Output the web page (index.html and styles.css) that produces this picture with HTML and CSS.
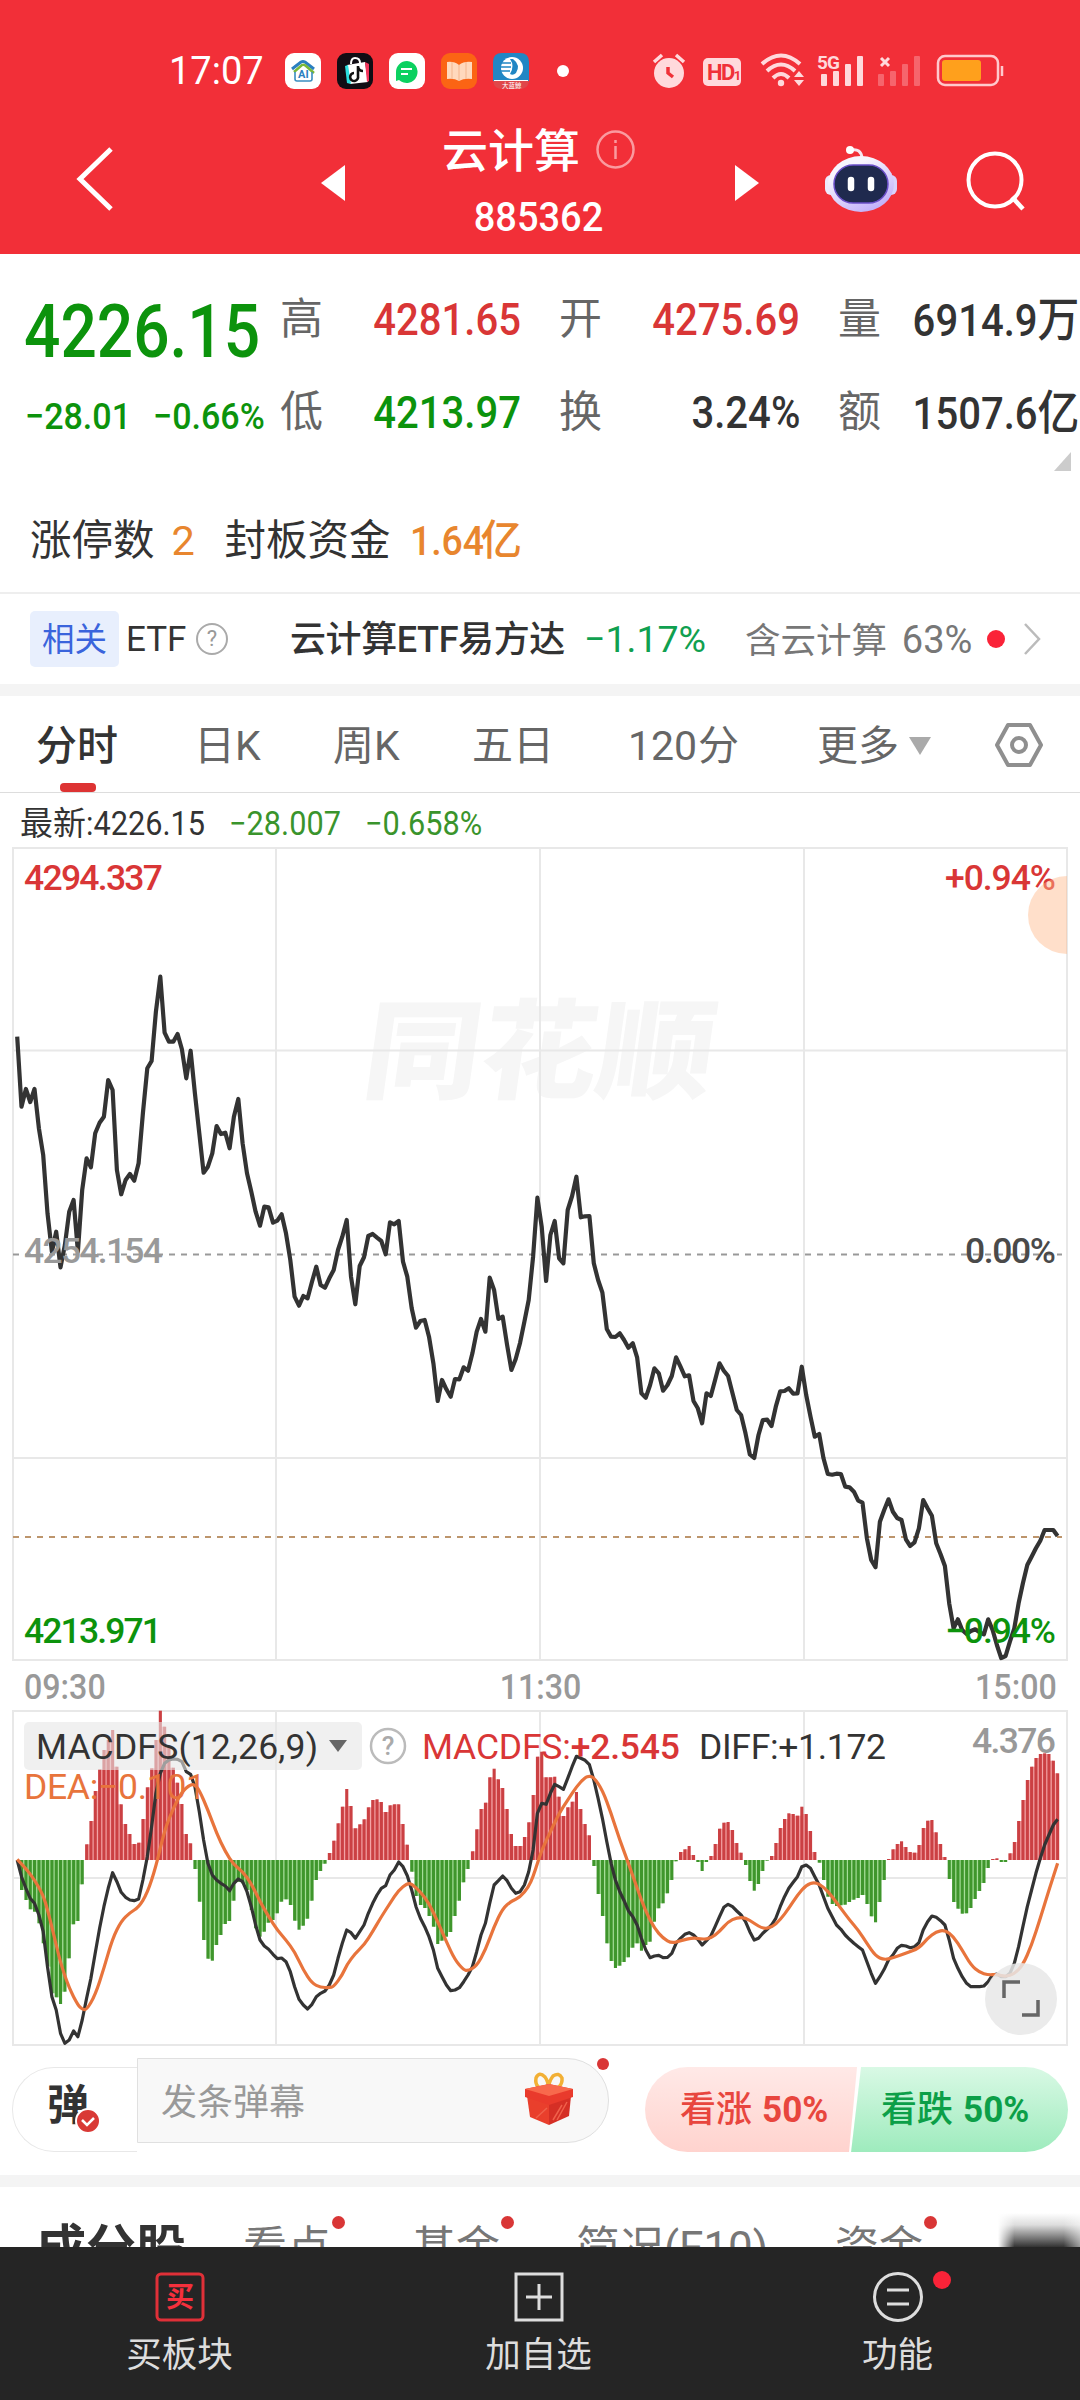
FILE: index.html
```html
<!DOCTYPE html>
<html lang="zh-CN">
<head>
    <meta charset="utf-8">
    <title>云计算 885362</title>
    <link rel="stylesheet" href="styles.css">
</head>
<body>
    <header>
        <div class="status">
            <span class="clock">17:07</span>
            <svg class="apps" width="290" height="36" viewBox="0 0 290 36">
                <rect width="36" height="36" rx="9" fill="#fff"/>
                <path d="M7 16L16 9Q18 8 20 9L29 16" fill="none" stroke="#2a7fc0" stroke-width="3"/>
                <path d="M9 19L17 12Q19 11 21 13L29 20" fill="none" stroke="#79b83a" stroke-width="2.5"/>
                <path d="M10 19V26Q10 28 12 28H25Q27 28 27 26V19" fill="none" stroke="#3a8dc0" stroke-width="1.6"/>
                <text x="13" y="25" class="app-ai">AI</text>
                <rect x="52" width="36" height="36" rx="9" fill="#110d14"/>
                <path d="M62 12L80 9L83 29L65 31Z" fill="#fff"/>
                <path d="M60 13L63 12L66 31L62 30Z" fill="#2be0e0"/>
                <path d="M80 9L84 11L84 28L82 29Z" fill="#f4355c"/>
                <path d="M66 11Q66 5 70 5Q75 5 75 10" fill="none" stroke="#fff" stroke-width="2"/>
                <path d="M73 13V23A4 4 0 1 1 69 20M73 14Q74 18 78 18" fill="none" stroke="#111" stroke-width="2.6"/>
                <rect x="104" width="36" height="36" rx="9" fill="#fff"/>
                <path d="M122 8A11 11 0 1 1 114 27L111 28V19A11 11 0 0 1 122 8Z" fill="#0bd160"/>
                <path d="M116 16H127M116 21H123" stroke="#fff" stroke-width="2"/>
                <rect x="156" width="36" height="36" rx="9" fill="#fb6414"/>
                <path d="M162 9Q169 8 174 12Q179 8 187 9V26Q179 25 174 28Q169 25 162 26Z" fill="#ffd9bd"/>
                <path d="M174 12V28M167 9V26M181 9V26" stroke="#f3b58d" stroke-width="1"/>
                <path d="M208 28V9Q208 0 217 0H235Q244 0 244 9V28Z" fill="#2186c4"/>
                <path d="M208 28H244Q243 36 235 36H217Q209 36 208 28Z" fill="#e0474a"/>
                <circle cx="227" cy="15" r="11" fill="#fff"/>
                <path d="M228 6Q236 12 231 20Q228 23 225 21Q230 13 225 6Z" fill="#2186c4"/>
                <path d="M215 10H226M214 14H226M214 18H225" stroke="#2186c4" stroke-width="1.4"/>
                <path d="M209 27.500H243" stroke="#fff" stroke-width="1"/>
                <text x="217" y="34.500" class="app-hot">大蓝鲸</text>
                <circle cx="278" cy="18" r="6" fill="#fff"/>
            </svg>
            <svg class="signals" width="356" height="42" viewBox="0 -6 356 42">
                <g fill="#ffd9dc" stroke="none">
                    <circle cx="17" cy="20" r="15"/>
                    <path d="M2 9L10 2M32 9L24 2" stroke="#ffd9dc" stroke-width="3.500"/>
                    <path d="M16 14V20L21 24" fill="none" stroke="#f03038" stroke-width="3.500"/>
                    <rect x="51" y="5" width="38" height="28" rx="5"/>
                    <text x="55" y="27" class="hd">HD<tspan font-size="13">1</tspan></text>
                    <path d="M110 11Q129 -6 148 11M115 18Q129 5 143 18M121 25Q129 17 137 25" fill="none" stroke="#ffd9dc" stroke-width="4"/>
                    <circle cx="129" cy="30" r="3.200"/>
                    <path d="M142 24L147 18L152 24ZM142 27H152L147 33Z"/>
                    <text x="165" y="16" class="net">5G</text>
                    <rect x="169" y="21" width="6" height="12" rx="1"/>
                    <rect x="181" y="18" width="6" height="15" rx="1"/>
                    <rect x="193" y="11" width="6" height="22" rx="1"/>
                    <rect x="205" y="3" width="6" height="30" rx="1"/>
                </g>
                <path d="M229 5L237 13M237 5L229 13" stroke="#ffd9dc" stroke-width="3"/>
                <g fill="#f6656d">
                    <rect x="226" y="21" width="6" height="12" rx="1"/>
                    <rect x="238" y="18" width="6" height="15" rx="1"/>
                    <rect x="250" y="11" width="6" height="22" rx="1"/>
                    <rect x="262" y="3" width="6" height="30" rx="1"/>
                </g>
                <rect x="286" y="3" width="60" height="29" rx="7" fill="none" stroke="#ffc9cd" stroke-width="2.500"/>
                <rect x="290" y="7" width="39" height="21" rx="3" fill="#ffa01c"/>
                <path d="M350 13V23" stroke="#ffc9cd" stroke-width="2.500"/>
            </svg>
        </div>
        <div class="topbar">
            <svg class="back" width="40" height="66" viewBox="0 0 40 66"><path d="M35 3L4 33L35 63" fill="none" stroke="#fff" stroke-width="5"/></svg>
            <svg class="prev" width="24" height="36" viewBox="0 0 24 36"><path d="M24 0V36L0 18Z" fill="#fff"/></svg>
            <div class="title">
                <h1>云计算
                    <svg width="39" height="39" viewBox="0 0 39 39"><circle cx="19.500" cy="19.500" r="18" fill="none" stroke="#fa9a9f" stroke-width="2.500"/><path d="M19.500 16V29M19.500 10V13" stroke="#fa9a9f" stroke-width="2.500"/></svg>
                </h1>
                <div class="code">885362</div>
            </div>
            <svg class="next" width="24" height="36" viewBox="0 0 24 36"><path d="M0 0V36L24 18Z" fill="#fff"/></svg>
            <svg class="robot" width="74" height="68" viewBox="0 0 74 68">
                <defs>
                    <linearGradient id="shell" x1="0" y1="0" x2="0.600" y2="1"><stop offset="0.300" stop-color="#f7f5fd"/><stop offset="1" stop-color="#c3b2fa"/></linearGradient>
                </defs>
                <path d="M27 5Q37 3 38 13" fill="none" stroke="#f7e6f0" stroke-width="3"/>
                <circle cx="26" cy="5" r="4" fill="#fff"/>
                <rect x="1" y="30" width="12" height="20" rx="6" fill="#eeeafc"/>
                <rect x="61" y="30" width="12" height="20" rx="6" fill="#d9d2fb"/>
                <ellipse cx="37" cy="39" rx="33" ry="28" fill="url(#shell)"/>
                <rect x="10" y="20" width="54" height="38" rx="19" fill="#1f2a4e" stroke="#6a4fc8" stroke-width="1.500"/>
                <path d="M27 35V43M47 35V43" stroke="#fff" stroke-width="6.500" stroke-linecap="round"/>
            </svg>
            <svg class="search" width="62" height="62" viewBox="0 0 62 62"><circle cx="30" cy="30" r="26.500" fill="none" stroke="#fff" stroke-width="4"/><path d="M47 47L58 59" stroke="#fff" stroke-width="4.500"/></svg>
        </div>
    </header>

    <section class="quote">
        <div class="price"><span class="num">4226.15</span></div>
        <div class="stat">高<span class="num red">4281.65</span></div>
        <div class="stat">开<span class="num red">4275.69</span></div>
        <div class="stat">量<span class="num">6914.9<i>万</i></span></div>
        <div class="change"><span class="num">−28.01</span><span class="num">−0.66%</span></div>
        <div class="stat">低<span class="num green">4213.97</span></div>
        <div class="stat">换<span class="num">3.24%</span></div>
        <div class="stat">额<span class="num">1507.6<i>亿</i></span></div>
    </section>
    <div class="facts">
        <span>涨停数</span><b class="limit">2</b><span>封板资金</span><b class="fund"><em>1.64</em>亿</b>
    </div>
    <div class="etf">
        <span class="badge">相关</span>
        <span class="etf-label">ETF</span>
        <span class="help">?</span>
        <span class="etf-name">云计算ETF易方达</span>
        <span class="etf-rate">−1.17%</span>
        <span class="etf-hold">含云计算 <em>63%</em></span>
        <span class="dot"></span>
        <svg width="20" height="34" viewBox="0 0 20 34"><path d="M2 2L16 17L2 32" fill="none" stroke="#bbb" stroke-width="2.500"/></svg>
    </div>
    <div class="band"></div>

    <nav class="periods">
        <span class="active">分时</span>
        <span>日K</span>
        <span>周K</span>
        <span>五日</span>
        <span><em>120</em>分</span>
        <span>更多</span>
        <svg class="caret" width="22" height="18" viewBox="0 0 22 18"><path d="M0 0H22L11 18Z" fill="#aaa"/></svg>
        <svg class="setting" width="50" height="46" viewBox="0 0 50 46"><path d="M14 3H36L47 23L36 43H14L3 23Z" fill="none" stroke="#8f8f8f" stroke-width="4" stroke-linejoin="round"/><circle cx="25" cy="23" r="7" fill="none" stroke="#8f8f8f" stroke-width="4"/></svg>
    </nav>
    <div class="latest">
        <span class="last">最新<em>:4226.15</em></span>
        <em class="diff">−28.007</em>
        <em class="rate">−0.658%</em>
    </div>

    <svg class="chart" width="1080" height="822" viewBox="0 0 1080 822">
        <g class="watermark" transform="translate(350 155) skewX(-8)">
            <text x="23" y="95" textLength="350" lengthAdjust="spacingAndGlyphs">同花顺</text>
        </g>
        <path class="grid" d="M13 8H1067V820H13ZM276 8V820M540 8V820M804 8V820M13 210.500H1067M13 618H1067"/>
        <path class="dash" d="M13 414.500H1062"/>
        <path class="dash orange" d="M13 697H1062"/>
        <polyline id="price-line"/>
        <text x="24" y="50" textLength="139" class="red">4294.337</text>
        <text x="24" y="423" textLength="139" class="muted">4254.154</text>
        <text x="24" y="803" textLength="138" class="green">4213.971</text>
        <text x="945" y="50" textLength="111" class="red">+0.94%</text>
        <text x="965" y="423" textLength="91" class="dark">0.00%</text>
        <text x="945" y="803" textLength="111" class="green">−0.94%</text>
        <path d="M1067 36A39 39 0 0 0 1067 114Z" fill="#ffb88a" fill-opacity="0.450"/>
    </svg>
    <div class="times"><span>09:30</span><span>11:30</span><span>15:00</span></div>
    <svg class="chart" width="1080" height="340" viewBox="0 0 1080 340">
        <path class="grid" d="M13 3H1067V337H13ZM276 3V337M540 3V337M804 3V337M13 170H1067"/>
        <g id="bars"></g>
        <polyline id="diff-line"/>
        <path id="dea-line"/>
        <rect x="24" y="14" width="338" height="48" rx="5" fill="#e6e6e6" fill-opacity="0.600"/>
        <text x="36" y="51" textLength="282" class="black">MACDFS(12,26,9)</text>
        <path d="M329 32H347L338 44Z" fill="#666"/>
        <circle cx="388" cy="38" r="17" fill="none" stroke="#bbb" stroke-width="2.500"/>
        <text x="388" y="47" text-anchor="middle" class="ask">?</text>
        <text x="422" y="51" textLength="258" class="red light">MACDFS:<tspan>+2.545</tspan></text>
        <text x="699" y="51" textLength="187" class="black">DIFF:+1.172</text>
        <text x="24" y="91" textLength="182" class="dea">DEA:−0.101</text>
        <text x="972" y="45" textLength="84" class="muted">4.376</text>
        <circle cx="1021" cy="291" r="36" fill="#e8e8e8" fill-opacity="0.850"/>
        <path d="M1004 290V274H1020M1022 307H1038V292" fill="none" stroke="#666" stroke-width="3.500"/>
    </svg>

    <section class="talk">
        <div class="barrage">弹<svg width="26" height="26" viewBox="0 0 26 26"><circle cx="13" cy="13" r="12" fill="#d93a36" stroke="#fff" stroke-width="2"/><path d="M7 12L12 17L19 10" fill="none" stroke="#fff" stroke-width="2.500"/></svg></div>
        <div class="input">发条弹幕
            <svg width="50" height="54" viewBox="0 0 50 54">
                <path d="M24 18Q10 17 12 6Q15 -1 21 5Q25 10 24 18Q25 9 29 4Q35 0 38 6Q39 17 25 18" fill="none" stroke="#f2b035" stroke-width="3.500"/>
                <path d="M3 24L25 32V53L6 45Z" fill="#e93f2c"/>
                <path d="M47 24L25 32V53L45 44Z" fill="#d52f25"/>
                <path d="M1 17L25 12L49 17V25L25 33L1 25Z" fill="#e93a2c"/>
                <path d="M1 17L25 12L49 17L25 24Z" fill="#f8694c"/>
                <path d="M23 36L12 46M38 33L29 48M43 30L33 48" stroke="#f0604a" stroke-width="1.500"/>
            </svg>
            <span class="dot"></span>
        </div>
        <div class="vote">
            <div class="up">看涨<b>50%</b></div>
            <div class="down">看跌<b>50%</b></div>
        </div>
    </section>
    <div class="band"></div>
    <nav class="sections">
        <span class="active">成分股</span>
        <span>看点<i></i></span>
        <span>基金<i></i></span>
        <span>简况<em>(F10)</em></span>
        <span>资金<i></i></span>
        <div class="shade"></div>
    </nav>
    <footer>
        <a>
            <svg width="50" height="50" viewBox="0 0 50 50"><rect x="2" y="2" width="46" height="46" rx="4" fill="none" stroke="#e03038" stroke-width="3"/><text x="25" y="35" text-anchor="middle" class="buy">买</text></svg>
            买板块
        </a>
        <a>
            <svg width="50" height="50" viewBox="0 0 50 50"><rect x="2" y="2" width="46" height="46" fill="none" stroke="#ddd" stroke-width="3"/><path d="M25 12V38M12 25H38" stroke="#ddd" stroke-width="3"/></svg>
            加自选
        </a>
        <a>
            <svg width="52" height="50" viewBox="0 0 52 50"><circle cx="26" cy="25" r="23.500" fill="none" stroke="#ddd" stroke-width="3"/><path d="M15 18H37M15 32H37" stroke="#ddd" stroke-width="3"/></svg>
            功能
            <span class="dot"></span>
        </a>
    </footer>
    <script src="chart.js"></script>
</body>
</html>
```
FILE: styles.css
```css
* {
    box-sizing: border-box;
}

body {
    margin: 0;
    width: 1080px;
    height: 2400px;
    overflow: hidden;
    background: #fff;
    color: #333;
    font-family: Roboto, "Noto Sans CJK SC", sans-serif;
    line-height: 1;
}

svg {
    display: block;
    flex: none;
}

em, i {
    font-style: normal;
}

span, b, em {
    white-space: nowrap;
}

/* header */
header {
    height: 254px;
    padding-top: 53px;
    background: #f22f38;
    color: #fff;
}

.status {
    display: flex;
    height: 36px;
    padding-left: 169px;
}

.clock {
    width: 116px;
    font-size: 38px;
    line-height: 36px;
}

.signals {
    margin-left: 77px;
    margin-top: -6px;
}

.app-ai {
    font-size: 11px;
    font-weight: bold;
    fill: #2a7fc0;
}

.app-hot {
    font-size: 6.5px;
    fill: #fff;
}

.hd {
    font-size: 22px;
    font-weight: bold;
    letter-spacing: -1.5px;
    fill: #f03038;
}

.net {
    font-size: 19px;
    font-weight: bold;
    letter-spacing: -1px;
}

.topbar {
    display: flex;
    align-items: center;
    height: 165px;
    padding: 15px 0 0 76px;
}

.prev {
    margin-left: 205px;
    margin-top: 8px;
}

.title {
    width: 193px;
    margin: 8px 0 0 97px;
}

h1 {
    display: flex;
    align-items: center;
    justify-content: space-between;
    margin: 0 0 24px;
    font-size: 46px;
    font-weight: 500;
}

h1 svg {
    margin-top: -4px;
}

.code {
    font-size: 40px;
    font-weight: 500;
    text-align: center;
    transform: scaleX(0.950);
}

.next {
    margin-left: 100px;
    margin-top: 8px;
}

.robot {
    margin-left: 65px;
}

.search {
    margin-left: 67px;
    margin-top: 4px;
}

/* quote numbers */
.red {
    color: #d93636;
    fill: #d93636;
}

.green {
    color: #0c930c;
    fill: #0c930c;
}

.quote {
    position: relative;
    display: grid;
    grid-template-columns: 255px 241px 240px 240px;
    grid-template-rows: 93px 93px;
    height: 204px;
    padding: 19px 0 0 25px;
}

.quote::after {
    content: "";
    position: absolute;
    right: 9px;
    bottom: -13px;
    border-left: 17px solid transparent;
    border-bottom: 19px solid #ccc;
}

.num {
    display: inline-block;
    font-weight: 500;
    transform: scaleX(0.89);
    transform-origin: right;
}

.price {
    padding-top: 22px;
    color: #0c930c;
    font-size: 74px;
}

.price .num {
    margin-left: -1px;
    transform: scaleX(0.865);
    transform-origin: left;
}

.change {
    display: flex;
    padding-top: 32px;
    color: #0c930c;
    font-size: 37px;
}

.change .num {
    width: 129px;
    transform: scaleX(0.920);
    transform-origin: left;
}

.stat {
    display: flex;
    align-items: center;
    justify-content: space-between;
    color: #666;
    font-size: 43px;
}

.stat:nth-child(4n + 3) {
    padding-left: 38px;
    width: 279px;
}

.stat:nth-child(4n + 4) {
    padding-left: 77px;
    width: 318px;
}

.stat .num {
    font-size: 45px;
    color: #333;
}

.stat .num i {
    font-size: 47px;
}

.stat .red {
    color: #d93636;
}

.stat .green {
    color: #0c930c;
}

.facts {
    display: flex;
    align-items: center;
    height: 136px;
    padding: 32px 0 0 30px;
    border-bottom: 2px solid #eee;
    font-size: 41.500px;
}

.facts b {
    font-weight: 500;
    color: #e8862e;
}

.limit {
    width: 70px;
    padding-left: 17px;
}

.facts .limit {
    font-weight: 400;
}

.fund {
    padding-left: 19px;
}

.fund em {
    display: inline-block;
    width: 71px;
    transform: scaleX(0.9);
    transform-origin: left;
}

.etf {
    display: flex;
    align-items: center;
    height: 90px;
    padding-left: 30px;
    font-size: 36px;
}

.badge {
    width: 89px;
    height: 56px;
    border-radius: 5px;
    background: #e8effd;
    color: #3a64dc;
    font-size: 32.500px;
    line-height: 58px;
    text-align: center;
}

.etf-label {
    width: 77px;
    padding-left: 7px;
    font-size: 35px;
}

.help {
    width: 32px;
    height: 32px;
    border: 2px solid #aaa;
    border-radius: 50%;
    color: #999;
    font-size: 22px;
    line-height: 28px;
    text-align: center;
}

.etf-name {
    width: 275px;
    margin-left: 62px;
    padding-top: 2px;
    font-weight: 500;
    letter-spacing: -0.400px;
}

.etf-rate {
    width: 180px;
    padding: 2px 0 0 19px;
    color: #10a050;
    font-size: 37.500px;
}

.etf-hold {
    width: 242px;
    padding-top: 2px;
    color: #777;
    font-size: 35.500px;
}

.etf-hold em {
    margin-left: 6px;
    font-size: 38px;
}

.dot {
    width: 18px;
    height: 18px;
    border-radius: 50%;
    background: #fa2338;
}

.etf svg {
    margin-left: 18px;
}

.band {
    height: 12px;
    background: #f4f4f4;
}

/* period tabs */
.periods {
    position: relative;
    display: flex;
    align-items: center;
    height: 97px;
    padding: 4px 0 0 36px;
    border-bottom: 1px solid #ddd;
    color: #666;
    font-size: 41px;
}

.periods span {
    width: 139px;
}

.periods .active {
    width: 158px;
    color: #333;
    font-weight: 500;
}

.periods .active::after {
    content: "";
    position: absolute;
    left: 60px;
    bottom: 0;
    width: 36px;
    height: 9px;
    border-radius: 4px;
    background: #dd3333;
}

.periods span:nth-child(4) {
    width: 156px;
}

.periods span:nth-child(5) {
    width: 189px;
}

.periods span:nth-child(6) {
    width: 92px;
}

.periods em {
    display: inline-block;
    width: 70px;
}

.setting {
    margin-left: 63px;
    margin-top: -3px;
}

.latest {
    display: flex;
    align-items: center;
    height: 47px;
    padding: 13px 0 0 20px;
    font-size: 33px;
}

.latest em {
    display: inline-block;
    transform: scaleX(0.93);
    transform-origin: left;
}

.last {
    width: 209px;
}

.latest .diff, .latest .rate {
    width: 136px;
    color: #3a942c;
}

/* charts */
.chart text {
    font-size: 35.500px;
    font-weight: 500;
}

.grid {
    fill: none;
    stroke: #e8e8e8;
    stroke-width: 2;
}

.dash {
    stroke: #999;
    stroke-width: 1.800;
    stroke-dasharray: 6 6;
}

.orange {
    stroke: #bd956c;
}

.chart .watermark text {
    font-size: 108px;
    font-weight: 900;
    fill: #f6f6f6;
}

.muted {
    fill: #999;
}

.dark {
    fill: #4a4a4a;
}

.chart .black, .chart .light {
    font-weight: 400;
}

.chart .light tspan {
    font-weight: 500;
}

.black {
    fill: #333;
}

.dea {
    fill: #e8743c;
}

.chart .dea {
    font-weight: 400;
}

.chart .ask {
    font-size: 26px;
    fill: #aaa;
}

#price-line {
    fill: none;
    stroke: #333;
    stroke-width: 4.200;
    stroke-linejoin: round;
}

#diff-line {
    fill: none;
    stroke: #333;
    stroke-width: 3.200;
    stroke-linejoin: round;
}

#dea-line {
    fill: none;
    stroke: #e8743c;
    stroke-width: 3.200;
}

.times {
    display: flex;
    justify-content: space-between;
    height: 46px;
    padding: 8px 24px 0;
    color: #999;
    font-size: 35px;
    font-weight: 500;
}

.times span {
    width: 88px;
    transform: scaleX(0.92);
    transform-origin: left;
}

.times span:nth-child(2) {
    padding-left: 4px;
}

.times span:last-child {
    transform-origin: right;
    text-align: right;
}

/* barrage and vote */
.talk {
    display: flex;
    height: 127px;
    padding: 10px 12px 0;
}

.barrage {
    position: relative;
    width: 125px;
    height: 85px;
    margin-top: 9px;
    padding: 17px 0 0 34px;
    border: 1px solid #e8e8e8;
    border-right: 0;
    border-radius: 42px 0 0 42px;
    font-size: 42px;
    font-weight: bold;
}

.barrage svg {
    position: absolute;
    left: 62px;
    top: 40px;
}

.input {
    position: relative;
    display: flex;
    justify-content: space-between;
    width: 472px;
    height: 85px;
    padding: 26px 34px 0 23px;
    border: 1px solid #e0e0e0;
    border-radius: 0 42px 42px 0;
    background: #f8f8f8;
    color: #999;
    font-size: 36px;
}

.input svg {
    margin-top: -13px;
}

.input .dot {
    position: absolute;
    right: -1px;
    top: -1px;
    width: 12px;
    height: 12px;
    background: #d93636;
}

.vote {
    display: flex;
    margin: 9px 0 0 36px;
    width: 423px;
    height: 85px;
    border-radius: 43px;
    overflow: hidden;
    font-size: 36px;
    font-weight: 500;
    line-height: 86px;
}

.vote b {
    display: inline-block;
    margin-left: 10px;
    font-size: 37px;
    transform: scaleX(0.95);
    transform-origin: left;
}

.up {
    width: 214px;
    padding-left: 35px;
    background: linear-gradient(#ffe9e7, #ffd3ce);
    color: #e8463e;
    clip-path: polygon(0 0, 100% 0, 204px 100%, 0 100%);
}

.down {
    width: 219px;
    margin-left: -6px;
    padding-left: 30px;
    background: linear-gradient(#d9f9e5, #9eebbd);
    color: #0c9f48;
    clip-path: polygon(10px 0, 100% 0, 100% 100%, 0 100%);
}

/* section tabs, cut by the bottom bar */
.sections {
    display: flex;
    height: 60px;
    padding: 37px 0 0 36px;
    overflow: hidden;
    color: #777;
    font-size: 44px;
}

.sections span {
    position: relative;
    margin-top: 2px;
}

.sections .active {
    width: 207px;
    margin-top: 0;
    color: #333;
    font-size: 50px;
    font-weight: bold;
}

.sections span:nth-child(2) {
    width: 169px;
}

.sections span:nth-child(3) {
    width: 164px;
}

.sections span:nth-child(4) {
    width: 259px;
}

.sections span:nth-child(5) {
    width: 163px;
}

.sections i {
    position: absolute;
    left: 89px;
    top: -10px;
    width: 13px;
    height: 13px;
    border-radius: 50%;
    background: #d93636;
}

.sections .shade {
    width: 82px;
    height: 34px;
    margin-top: -11px;
    background: linear-gradient(to right, #fff, transparent 20%, transparent 80%, rgba(255, 255, 255, 0.500)), linear-gradient(#fff, #ddd 35%, #333);
}

footer {
    display: flex;
    height: 153px;
    background: #252525;
}

footer a {
    position: relative;
    display: flex;
    flex-direction: column;
    align-items: center;
    width: 359px;
    padding-top: 25px;
    color: #ddd;
    font-size: 35.500px;
    line-height: 67px;
}

.buy {
    font-size: 28px;
    font-weight: bold;
    fill: #f5303c;
}

footer .dot {
    position: absolute;
    left: 215px;
    top: 24px;
}
```
FILE: chart.js
```js
// one value per trading minute, 3 units to a pixel
var price = [590,800,747,786,747,865,945,1120,1235,1175,1282,1215,1115,1080,1235,1050,955,982,880,848,
    830,720,750,990,1063,1020,1002,1022,970,820,685,663,515,410,578,605,605,582,628,715,
    632,760,880,998,980,940,858,882,878,925,830,777,910,1000,1055,1115,1157,1100,1102,1148,
    1142,1123,1180,1260,1370,1397,1368,1375,1325,1280,1335,1343,1315,1290,1230,1190,1140,1310,1393,1278,
    1252,1188,1182,1193,1203,1243,1147,1153,1143,1265,1310,1405,1463,1443,1440,1490,1570,1683,1620,1648,
    1670,1617,1618,1582,1592,1540,1475,1437,1475,1313,1350,1437,1430,1515,1590,1557,1508,1445,1380,1250,
    1073,1160,1323,1185,1143,1255,1270,1110,1068,1010,1132,1129,1128,1270,1320,1358,1467,1490,1491,1480,
    1500,1523,1510,1552,1660,1673,1635,1585,1600,1652,1635,1608,1552,1580,1609,1606,1683,1705,1750,1660,
    1668,1620,1570,1592,1608,1660,1710,1725,1780,1843,1854,1785,1740,1739,1758,1700,1654,1653,1645,1661,
    1660,1580,1665,1730,1790,1782,1855,1902,1904,1901,1902,1940,1942,1955,1982,1988,2095,2160,2182,2045,
    2010,1978,2015,2034,2040,2098,2118,2107,2065,1980,2005,2027,2110,2143,2178,2290,2365,2338,2370,2382,
    2373,2368,2377,2383,2338,2370,2415,2454,2448,2405,2365,2290,2230,2175,2150,2125,2102,2070,2070,2070,2088];

var macd = [510,600,630,658,665,700,760,830,910,922,942,905,805,703,693,583,463,393,303,238,
    180,150,120,230,343,402,432,462,458,387,292,235,150,62,110,170,233,278,342,432,
    460,537,635,750,806,812,765,735,702,693,632,575,580,600,660,715,740,725,698,690,
    670,635,628,645,692,719,707,686,632,570,543,521,489,452,400,350,297,348,415,403,
    388,352,330,328,336,366,346,343,343,402,464,545,618,645,654,678,710,762,752,740,
    726,678,632,577,537,484,418,357,338,262,236,268,294,357,432,468,468,441,397,315,
    200,185,262,262,260,320,378,352,335,306,357,402,436,528,612,678,760,813,834,827,
    816,802,773,760,782,765,755,695,655,640,610,570,514,486,478,468,495,516,543,516,
    498,462,416,398,396,420,459,488,525,573,602,582,543,512,498,459,414,387,370,372,
    377,350,372,423,486,518,570,620,642,648,646,644,636,629,624,615,642,679,697,636,
    570,507,478,462,454,471,486,488,465,414,392,390,427,462,501,567,636,656,671,670,
    654,627,603,579,534,507,505,516,516,490,456,393,330,270,230,204,192,190,192,212,250];

var diff = [510,560,595,625,640,675,725,830,920,960,1030,1060,1050,1023,1040,990,925,865,790,715,
    650,595,548,575,607,622,630,632,627,570,500,410,310,250,220,210,207,208,215,245,
    253,290,365,450,520,555,570,580,588,602,580,567,575,605,650,705,750,768,778,793,
    806,804,815,845,890,928,945,957,943,920,910,903,885,855,805,760,720,728,745,725,
    705,670,640,615,595,587,555,540,516,530,557,600,650,685,710,740,780,835,860,885,
    902,900,893,875,855,830,785,735,700,640,585,572,558,572,595,610,605,585,545,480,
    370,340,343,310,283,290,298,265,230,199,205,211,224,270,325,385,455,520,570,605,
    632,662,680,705,745,780,803,798,796,803,802,790,760,745,733,728,735,748,765,752,
    738,710,680,652,643,650,663,675,695,725,750,745,730,718,705,685,650,620,595,577,
    560,530,525,535,560,585,620,655,680,705,718,735,748,760,770,780,815,850,880,860,
    838,810,795,775,766,768,773,770,758,720,695,678,682,692,705,750,805,835,860,880,
    890,890,890,888,875,855,852,860,860,850,820,770,710,650,600,550,505,465,435,405,388];

// signal line: minute, value
var dea = [[0,508],[2,535],[4,570],[6,615],[7,660],[8,710],[10,820],[12,895],[14,945],[15,958],[16,960],[18,915],
    [20,835],[22,745],[24,693],[26,668],[28,652],[30,610],[32,530],[34,420],[36,355],[38,305],[40,283],[41,285],
    [42,300],[44,360],[46,430],[48,485],[50,525],[52,545],[54,580],[56,635],[58,680],[60,720],[62,750],[64,785],
    [66,840],[68,880],[70,892],[72,893],[73,890],[75,855],[76,825],[78,790],[80,765],[82,725],[84,680],[86,640],
    [88,600],[90,580],[91,582],[93,605],[95,640],[97,695],[99,755],[101,810],[103,840],[104,842],[106,828],[108,780],
    [110,710],[112,655],[114,633],[116,622],[118,590],[119,560],[120,520],[121,480],[123,425],[125,370],[127,330],
    [129,290],[131,262],[132,258],[133,262],[135,300],[137,370],[139,450],[141,520],[143,595],[145,665],[147,715],
    [149,745],[151,760],[153,752],[156,743],[158,748],[160,745],[162,725],[164,695],[166,683],[168,683],[170,700],
    [172,716],[174,713],[176,690],[178,655],[180,615],[182,585],[184,576],[186,590],[188,620],[190,655],[192,690],
    [194,720],[196,760],[198,798],[200,810],[202,803],[205,790],[208,775],[210,745],[212,725],[214,720],[216,740],
    [218,780],[220,825],[222,847],[224,855],[226,853],[228,860],[230,852],[232,825],[234,765],[236,685],[238,600],[240,520]];

var step = 4.335;

function px(i) {
    return 17.2 + i * step;
}

function macdY(v) {
    return v / 3 - 18;
}

document.getElementById('price-line').setAttribute('points', price.map(function(v, i) {
    return px(i).toFixed(1) + ',' + (v / 3).toFixed(1);
}).join(' '));

document.getElementById('diff-line').setAttribute('points', diff.map(function(v, i) {
    return px(i).toFixed(1) + ',' + macdY(v).toFixed(1);
}).join(' '));

// smooth the signal line through the midpoints
var pts = dea.map(function(p) { return [px(p[0]), macdY(p[1])]; });
var d = 'M' + pts[0];
for (var i = 1; i < pts.length - 1; i++) {
    d += 'Q' + pts[i] + ' ' + (pts[i][0] + pts[i + 1][0]) / 2 + ',' + (pts[i][1] + pts[i + 1][1]) / 2;
}
d += 'L' + pts[pts.length - 1];
document.getElementById('dea-line').setAttribute('d', d);

function bar(x, width, v, color) {
    var zero = macdY(510);
    var y = macdY(v);
    return '<rect x="' + x.toFixed(1) + '" y="' + Math.min(y, zero).toFixed(1) + '" width="' + width +
        '" height="' + Math.abs(y - zero).toFixed(1) + '" fill="' + color + '"/>';
}

var html = '';
macd.forEach(function(v, i) {
    var next = macd[i + 1];
    // pale fill between two neighbouring bars
    if (v < 510 && next < 510) {
        html += bar(px(i), step, Math.max(v, next), '#f3a3a5');
    } else if (v > 510 && next > 510) {
        html += bar(px(i), step, Math.min(v, next), '#a5dd98');
    }
});
macd.forEach(function(v, i) {
    html += bar(px(i) - 1.5, 3.1, v, v < 510 ? '#cb4043' : '#3f962c');
});
document.getElementById('bars').innerHTML = html;
```
